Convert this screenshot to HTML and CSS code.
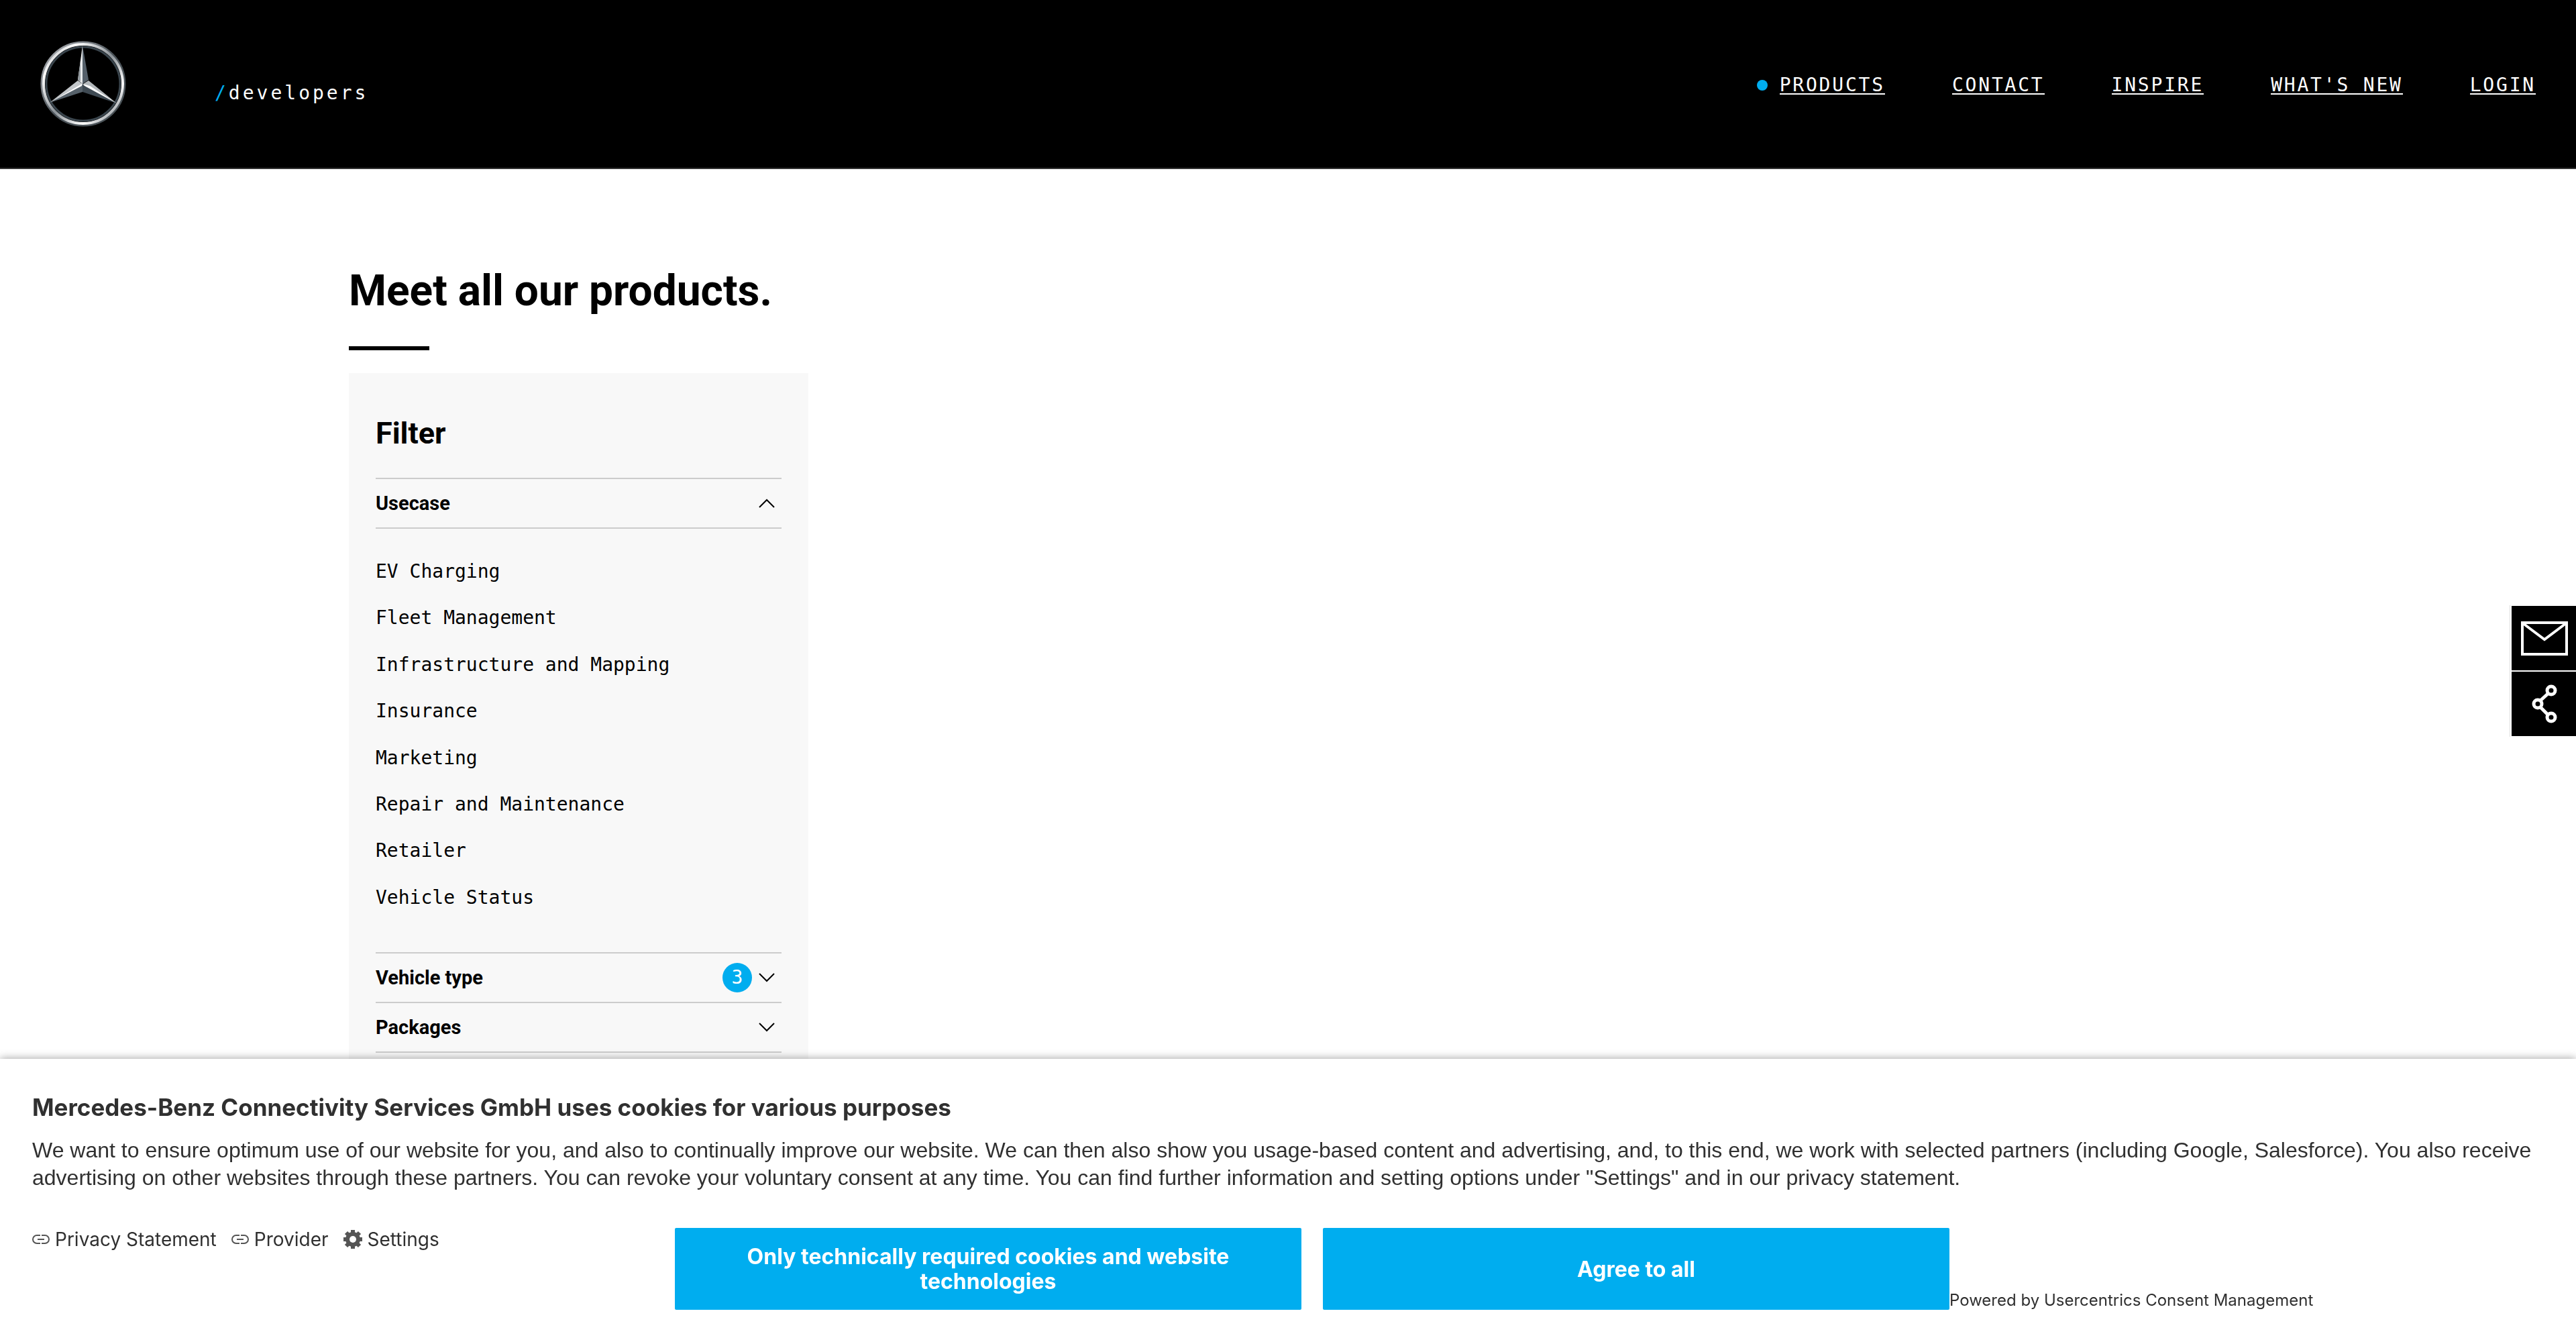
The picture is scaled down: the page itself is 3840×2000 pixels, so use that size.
FILE: index.html
```
<!DOCTYPE html>
<html lang="en">
<head>
<meta charset="utf-8">
<title>Products | /developers</title>
<link rel="stylesheet" href="styles.css">
</head>
<body>
<header class="site-header">
  <a class="brand" href="#" aria-label="Home">
    <svg class="brand-star" viewBox="0 0 128 128" aria-hidden="true">
      <defs>
        <linearGradient id="ring" x1="0" y1="0" x2="1" y2="1">
          <stop offset="0" stop-color="#8d9297"/><stop offset=".2" stop-color="#ffffff"/>
          <stop offset=".5" stop-color="#8b9298"/><stop offset=".75" stop-color="#ffffff"/><stop offset="1" stop-color="#59626a"/>
        </linearGradient>
        <linearGradient id="rim" x1="0" y1="0" x2="1" y2="1">
          <stop offset="0" stop-color="#b9bbc0"/><stop offset=".5" stop-color="#4a5258"/><stop offset="1" stop-color="#4b5358"/>
        </linearGradient>
      </defs>
      <circle cx="64" cy="64" r="62" fill="none" stroke="url(#rim)" stroke-width="3"/>
      <circle cx="64" cy="64" r="59" fill="none" stroke="url(#ring)" stroke-width="4"/>
      <circle cx="64" cy="64" r="55" fill="none" stroke="#3a454d" stroke-width="3"/>
      <path d="M63 7 56 58 63 64Z" fill="#e8eaeb"/><path d="M60 30 56 58 60 60Z" fill="#939a9f"/>
      <path d="M63 7 72 58 63 64Z" fill="#55606a"/>
      <path d="M56 59 63 64 14 92Z" fill="#c3c7ca"/><path d="M63 63V76L14 92Z" fill="#56616a"/><path d="M63 63 62 67 14 92Z" fill="#fff"/>
      <path d="M72 59 64 64 114 93Z" fill="#b4b9bd"/><path d="M63 64V76L114 93Z" fill="#3f4a53"/><path d="M63 64 66 67 114 93 74 67Z" fill="#fff"/>
    </svg>
    <span class="brand-name"><span class="slash">/</span>developers</span>
  </a>
  <nav class="main-nav" aria-label="Main">
    <a class="active" href="#">PRODUCTS</a>
    <a href="#">CONTACT</a>
    <a href="#">INSPIRE</a>
    <a href="#">WHAT'S NEW</a>
    <a href="#">LOGIN</a>
  </nav>
</header>

<main class="content">
  <h1>Meet all our products.</h1>
  <aside class="filter">
    <h2>Filter</h2>
    <button class="filter-group" type="button" aria-expanded="true">Usecase
      <svg class="chevron" viewBox="0 0 24 14"><path d="M1 13 12 2l11 11"/></svg>
    </button>
    <ul class="filter-options">
      <li><a href="#">EV Charging</a></li>
      <li><a href="#">Fleet Management</a></li>
      <li><a href="#">Infrastructure and Mapping</a></li>
      <li><a href="#">Insurance</a></li>
      <li><a href="#">Marketing</a></li>
      <li><a href="#">Repair and Maintenance</a></li>
      <li><a href="#">Retailer</a></li>
      <li><a href="#">Vehicle Status</a></li>
    </ul>
    <button class="filter-group" type="button" aria-expanded="false">Vehicle type
      <span class="count">3</span>
      <svg class="chevron" viewBox="0 0 24 14"><path d="M1 1l11 11L23 1"/></svg>
    </button>
    <button class="filter-group" type="button" aria-expanded="false">Packages
      <svg class="chevron" viewBox="0 0 24 14"><path d="M1 1l11 11L23 1"/></svg>
    </button>
  </aside>
</main>

<div class="side-tools">
  <button type="button" aria-label="Contact by mail">
    <svg viewBox="0 0 96 96"><path d="M16 25h66v47H16zM17 26l32 24 32-24"/></svg>
  </button>
  <button type="button" aria-label="Share">
    <svg class="share" viewBox="0 0 96 96"><path d="M43 43l12-11M43 53l12 12"/><circle cx="59" cy="28" r="6"/><circle cx="39" cy="48" r="6"/><circle cx="59" cy="68" r="6"/></svg>
  </button>
</div>

<section class="consent" aria-label="Cookie consent">
  <h2>Mercedes-Benz Connectivity Services GmbH uses cookies for various purposes</h2>
  <p>We want to ensure optimum use of our website for you, and also to continually improve our website. We can then also show you usage-based content and advertising, and, to this end, we work with selected partners (including Google, Salesforce). You also receive advertising on other websites through these partners. You can revoke your voluntary consent at any time. You can find further information and setting options under "Settings" and in our privacy statement.</p>
  <div class="consent-row">
    <div class="consent-links">
      <a href="#"><svg class="link-icon" viewBox="0 0 26 14"><path d="M12 1H7a6 6 0 0 0 0 12h5M14 1h5a6 6 0 0 1 0 12h-5M8 7h10"/></svg>Privacy Statement</a>
      <a href="#"><svg class="link-icon" viewBox="0 0 26 14"><path d="M12 1H7a6 6 0 0 0 0 12h5M14 1h5a6 6 0 0 1 0 12h-5M8 7h10"/></svg>Provider</a>
      <a href="#"><svg class="gear-icon" viewBox="0 0 28 28"><g stroke="#555" stroke-width="6"><path d="M14 0v28M0 14h28M4 4l20 20M24 4L4 24"/></g><circle cx="14" cy="14" r="11"/><circle cx="14" cy="14" r="5" fill="#fff"/></svg>Settings</a>
    </div>
    <button type="button">Only technically required cookies and website technologies</button>
    <button type="button">Agree to all</button>
    <p class="powered">Powered by Usercentrics Consent Management</p>
  </div>
</section>
</body>
</html>
```
FILE: styles.css
```
* { box-sizing: border-box; }

body {
  margin: 0;
  background: #fff;
  color: #000;
  font-family: Roboto, sans-serif;
  min-height: 100vh;
}

a { color: inherit; text-decoration: none; }
button { font: inherit; color: inherit; border: 0; cursor: pointer; }
h1, h2, p, ul { margin: 0; padding: 0; }

.site-header {
  display: flex;
  justify-content: space-between;
  align-items: center;
  padding: 61px 60px;
  background: #000;
  color: #fff;
  border-bottom: 2px solid #333;
  font: 28px/36px "DejaVu Sans Mono", monospace;
}

.brand { display: flex; align-items: center; gap: 132px; }
.brand-star { width: 128px; height: 128px; display: block; }
.brand-name { letter-spacing: 4px; padding-top: 28px; }
.slash { color: #00adef; }

.main-nav { display: flex; gap: 100px; }
.main-nav a {
  padding-top: 4px;
  line-height: 25px;
  border-bottom: 2px solid #fff;
  letter-spacing: 0.1em;
}
.main-nav .active { position: relative; }
.main-nav .active::before {
  content: "";
  position: absolute;
  left: -34px;
  top: 9px;
  width: 16px;
  height: 16px;
  border-radius: 50%;
  background: #00adef;
}

.content { padding: 142px 520px 0; }

h1 { font-size: 64px; line-height: 80px; }
h1::after {
  content: "";
  display: block;
  width: 120px;
  height: 6px;
  margin-top: 42px;
  background: #000;
}

.filter {
  width: 685px;
  margin-top: 34px;
  padding: 62px 40px 80px;
  background: #f8f8f8;
}
.filter h2 { font-size: 45px; line-height: 56px; margin-bottom: 38px; }

.filter-group {
  display: flex;
  align-items: center;
  gap: 10px;
  width: 100%;
  height: 76px;
  margin-bottom: -2px;
  padding: 0 10px 0 0;
  background: none;
  border-top: 2px solid #ccc;
  border-bottom: 2px solid #ccc;
  font-size: 29px;
  font-weight: 700;
  text-align: left;
}
.chevron {
  width: 24px;
  height: 14px;
  margin-left: auto;
  fill: none;
  stroke: #000;
  stroke-width: 2;
}
.count {
  width: 44px;
  height: 44px;
  margin-left: auto;
  border-radius: 50%;
  background: #00adef;
  color: #fff;
  font: 28px/44px "DejaVu Sans Mono", monospace;
  text-align: center;
}
.count + .chevron { margin-left: 0; }

.filter-options {
  list-style: none;
  padding: 48px 0 63px;
  font: 28px/1.3 "DejaVu Sans Mono", monospace;
}
.filter-options li { margin-bottom: 33px; }
.filter-options li:last-child { margin-bottom: 0; }

.side-tools {
  position: fixed;
  right: 0;
  top: 902px;
  display: flex;
  flex-direction: column;
  gap: 2px;
  padding: 1px 0 1px 2px;
  background: #fff;
  border-left: 1px solid #ddd;
}
.side-tools button { padding: 0; background: #000; }
.side-tools svg { display: block; width: 96px; height: 96px; fill: none; stroke: #fff; stroke-width: 4; }
.side-tools .share { stroke-width: 5; }

.consent {
  position: fixed;
  left: 0;
  right: 0;
  bottom: 0;
  padding: 48px;
  background: #fff;
  color: #303030;
  font-family: "Liberation Sans", sans-serif;
  box-shadow: 0 0 12px rgba(0, 0, 0, 0.4);
}
.consent h2 { font: 700 35px/48px Inter, sans-serif; margin-bottom: 20px; }
.consent p { font-size: 32px; line-height: 41px; }
.consent-row { display: flex; margin-top: 54px; }
.consent-links { display: flex; align-items: flex-start; gap: 22px; width: 958px; font: 28px/34px Inter, sans-serif; }
.consent-links a { display: flex; align-items: center; gap: 8px; }
.link-icon { width: 26px; height: 14px; fill: none; stroke: #555; stroke-width: 2; }
.gear-icon { width: 28px; height: 28px; fill: #555; }
.consent-row button {
  width: 934px;
  height: 122px;
  padding: 0 100px;
  border-radius: 2px;
  background: #00adef;
  color: #fff;
  font: 700 32px/37px Inter, sans-serif;
}
.consent-row button + button { margin-left: 32px; }
.consent .powered { align-self: flex-end; font: 24px/28px Inter, sans-serif; }
```
